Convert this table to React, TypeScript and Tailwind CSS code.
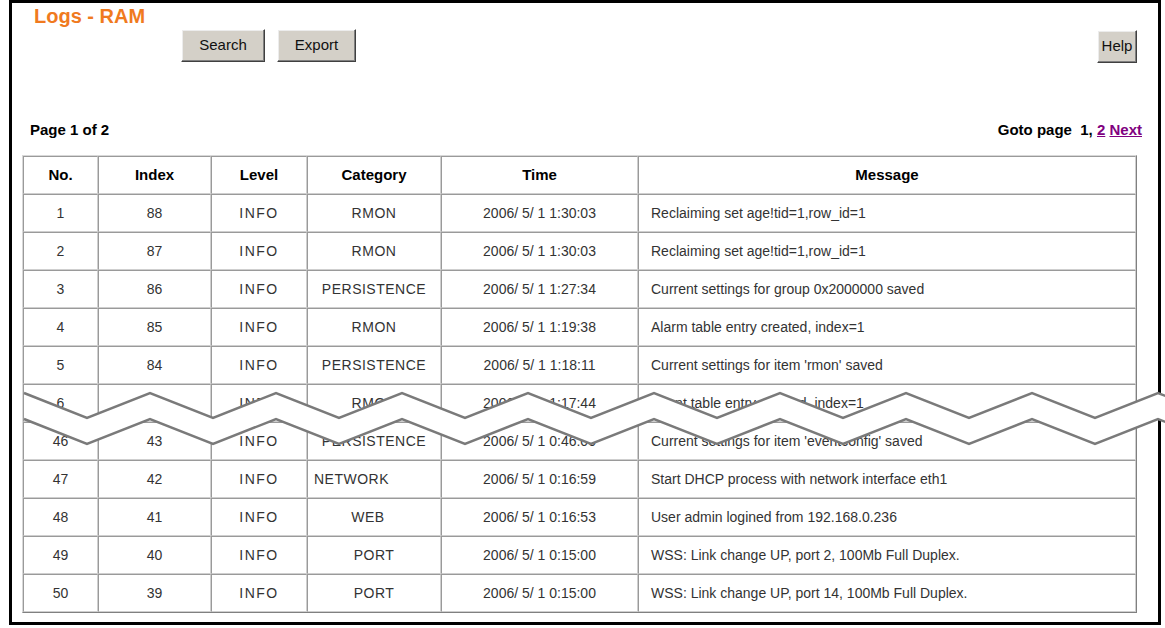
import React from "react";

type Row = {
  no: number;
  index: number;
  level: string;
  category: string;
  time: string;
  message: string;
  catClass?: string;
};

const rows: Row[] = [
  { no: 1, index: 88, level: "INFO", category: "RMON", time: "2006/ 5/ 1 1:30:03", message: "Reclaiming set age!tid=1,row_id=1" },
  { no: 2, index: 87, level: "INFO", category: "RMON", time: "2006/ 5/ 1 1:30:03", message: "Reclaiming set age!tid=1,row_id=1" },
  { no: 3, index: 86, level: "INFO", category: "PERSISTENCE", time: "2006/ 5/ 1 1:27:34", message: "Current settings for group 0x2000000 saved" },
  { no: 4, index: 85, level: "INFO", category: "RMON", time: "2006/ 5/ 1 1:19:38", message: "Alarm table entry created, index=1" },
  { no: 5, index: 84, level: "INFO", category: "PERSISTENCE", time: "2006/ 5/ 1 1:18:11", message: "Current settings for item 'rmon' saved" },
  { no: 6, index: 83, level: "INFO", category: "RMON", time: "2006/ 5/ 1 1:17:44", message: "Event table entry created, index=1" },
  { no: 46, index: 43, level: "INFO", category: "PERSISTENCE", time: "2006/ 5/ 1 0:46:00", message: "Current settings for item 'eventconfig' saved" },
  { no: 47, index: 42, level: "INFO", category: "NETWORK", time: "2006/ 5/ 1 0:16:59", message: "Start DHCP process with network interface eth1", catClass: "text-left pl-[6px]" },
  { no: 48, index: 41, level: "INFO", category: "WEB", time: "2006/ 5/ 1 0:16:53", message: "User admin logined from 192.168.0.236", catClass: "pr-[12px]" },
  { no: 49, index: 40, level: "INFO", category: "PORT", time: "2006/ 5/ 1 0:15:00", message: "WSS: Link change UP, port 2, 100Mb Full Duplex." },
  { no: 50, index: 39, level: "INFO", category: "PORT", time: "2006/ 5/ 1 0:15:00", message: "WSS: Link change UP, port 14, 100Mb Full Duplex." },
];

// zigzag "break" line across the table, in page coordinates
const upper: [number, number][] = [];
for (let k = -1; k < 19; k++) upper.push([87 + 63 * k, k % 2 === 0 ? 418 : 393]);
const lower = upper.map(([x, y]) => [x, y + 26] as [number, number]);
const pts = (p: [number, number][]) => p.map(([x, y]) => `${x},${y}`).join(" ");

const cell =
  "border border-t-[#9a9a9a] border-l-[#9a9a9a] border-b-[#cfcfcf] border-r-[#cfcfcf] align-middle";

function WinButton({ children, className }: { children: React.ReactNode; className: string }) {
  return (
    <button
      type="button"
      className={`h-[33px] border border-t-white border-l-white border-b-[#404040] border-r-[#404040] bg-[#d4d0c8] text-[15px] text-[#111] shadow-[inset_-1px_-1px_0_#808080,inset_1px_1px_0_#ececec] ${className}`}
    >
      {children}
    </button>
  );
}

export default function App() {
  return (
    <div className="relative h-[628px] w-[1165px] overflow-hidden bg-white font-['Liberation_Sans',Arial,sans-serif]">
      <div className="ml-[9px] flex h-[625px] w-[1152px] flex-col border-[3px] border-black">
        <div className="flex items-start pl-[22px] pr-[21px] pt-[2px]">
          <h1 className="w-[147px] text-[20px] font-bold leading-[22px] text-[#f07a1e]">Logs - RAM</h1>
          <WinButton className="mt-[24px] w-[84px]">Search</WinButton>
          <WinButton className="ml-[12px] mt-[24px] w-[79px]">Export</WinButton>
          <WinButton className="ml-auto mt-[25px] w-[40px]">Help</WinButton>
        </div>

        <div className="mt-[58px] flex items-center justify-between pl-[18px] pr-[16px] text-[15px] font-bold leading-[18px] text-black">
          <span>Page 1 of 2</span>
          <span>
            Goto page&nbsp; 1, <a className="text-[#800080] underline">2</a>{" "}
            <a className="text-[#800080] underline">Next</a>
          </span>
        </div>

        <table className="ml-[10px] mt-[16px] w-[1115px] table-fixed border-separate border-spacing-0 border border-t-[#d8d8d8] border-l-[#d8d8d8] border-b-[#808080] border-r-[#808080] text-[14px]">
          <colgroup>
            <col className="w-[75px]" />
            <col className="w-[113px]" />
            <col className="w-[96px]" />
            <col className="w-[134px]" />
            <col className="w-[197px]" />
            <col />
          </colgroup>
          <thead>
            <tr className="h-[38px] text-[15px] font-bold text-black">
              {["No.", "Index", "Level", "Category", "Time", "Message"].map((h) => (
                <th key={h} className={`${cell} text-center font-bold`}>
                  {h}
                </th>
              ))}
            </tr>
          </thead>
          <tbody className="text-[#333]">
            {rows.map((r) => (
              <tr key={r.no} className="h-[38px]">
                <td className={`${cell} text-center`}>{r.no}</td>
                <td className={`${cell} text-center`}>{r.index}</td>
                <td className={`${cell} text-center tracking-[1.5px]`}>{r.level}</td>
                <td className={`${cell} text-center tracking-[0.5px] ${r.catClass ?? ""}`}>{r.category}</td>
                <td className={`${cell} text-center`}>{r.time}</td>
                <td className={`${cell} pl-[12px] text-left`}>{r.message}</td>
              </tr>
            ))}
          </tbody>
        </table>
      </div>

      <svg
        className="absolute left-[12px] top-[383px]"
        width={1153}
        height={72}
        viewBox="12 383 1153 72"
      >
        <polygon points={pts([...upper, ...[...lower].reverse()])} fill="white" />
        <polyline points={pts(upper)} fill="none" stroke="#7a7a7a" strokeWidth={2.5} />
        <polyline points={pts(lower)} fill="none" stroke="#7a7a7a" strokeWidth={2.5} />
      </svg>
    </div>
  );
}
